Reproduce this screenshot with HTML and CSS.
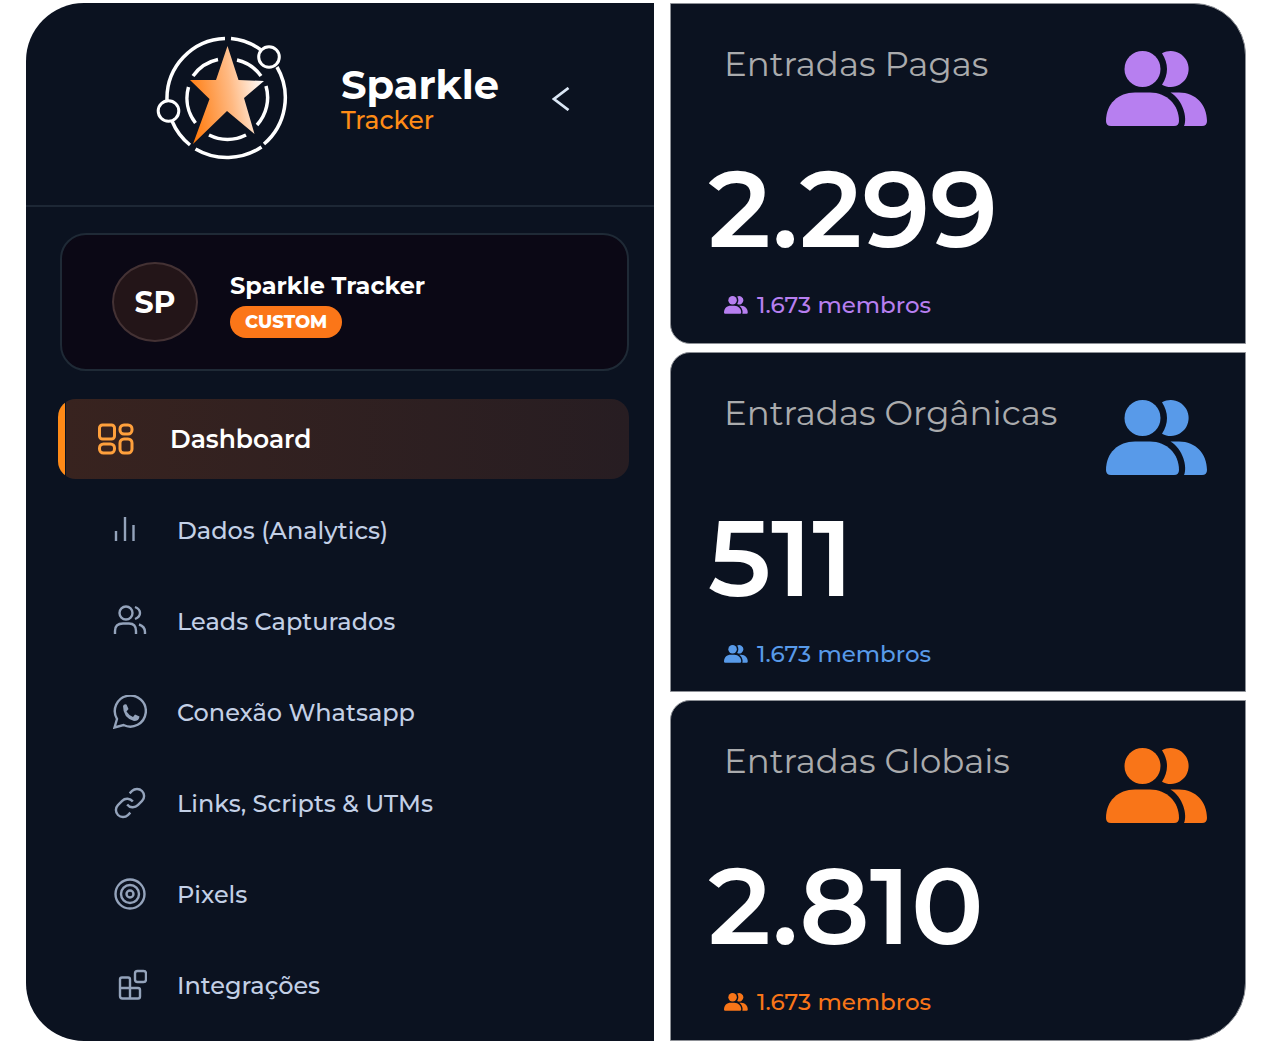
FILE: index.html
```html
<!DOCTYPE html>
<html lang="pt-BR">
<head>
<meta charset="utf-8">
<meta name="viewport" content="width=device-width, initial-scale=1">
<title>Sparkle Tracker</title>
<link rel="stylesheet" href="styles.css">
</head>
<body>
<svg class="sprite" aria-hidden="true">
  <symbol id="people" viewBox="0 0 102 76">
    <circle cx="36.5" cy="18" r="18"/>
    <path d="M56 2.2A18 18 0 1 1 56 33.800Q66 18 56 2.200Z"/>
    <path d="M0 70C0 53 12 41.500 29 41.500H44C61 41.500 73 54 73 70Q73 75 68 75H5Q0 75 0 70Z"/>
    <path d="M64.500 41.500H73C90 41.500 101 54 101 70Q101 75 96 75H78C81.500 67 77 49 64.500 41.500Z"/>
  </symbol>
</svg>
<div class="page">
  <aside class="sidebar">
    <header class="brand">
      <svg class="brand-logo" viewBox="0 0 134 124" fill="none" stroke="#fff" stroke-width="3.500" aria-hidden="true">
        <defs><linearGradient id="star" x1="0" y1="0.600" x2="1" y2="0.400"><stop offset="0" stop-color="#ff7a0c"/><stop offset="0.550" stop-color="#ffb982"/><stop offset="1" stop-color="#fff"/></linearGradient></defs>
        <path d="M69 2.500A60 60 0 0 0 11 64M16 85A60 60 0 0 0 34 109M39.500 113A62 62 0 0 0 105.500 111M108 108A61 61 0 0 0 121 31M105 14A60 60 0 0 0 75 2.500"/>
        <circle cx="113" cy="21" r="10.300" stroke-width="3"/>
        <circle cx="12.500" cy="75" r="10.300" stroke-width="3"/>
        <path d="M62 23.500A41 41 0 0 0 37 40M32.500 51A41 41 0 0 0 39.500 87M53 99A41 41 0 0 0 90 99M101 89A41 41 0 0 0 110 50M105 40A41 41 0 0 0 81 24"/>
        <path fill="url(#star)" stroke="none" d="M71.500 10L82.500 44L108 45L88 62L98.500 98L71 75L37 108L53.500 63L34 44L60 44Z"/>
      </svg>
      <div class="wordmark"><span class="wordmark-name">Sparkle</span><span class="wordmark-sub">Tracker</span></div>
      <button class="collapse" type="button" aria-label="Recolher menu">
        <svg viewBox="0 0 18 24" fill="none" stroke="currentColor" stroke-width="2.800"><path d="M16.500 1L2 12L16.500 23"/></svg>
      </button>
    </header>
    <section class="profile">
      <span class="avatar">SP</span>
      <div class="profile-info"><strong class="profile-name">Sparkle Tracker</strong><span class="badge">CUSTOM</span></div>
    </section>
    <nav class="menu">
      <a class="menu-item active" href="#"><svg class="icon" viewBox="0 0 36 32"><rect x="1.500" y="2" width="15" height="14" rx="3"/><rect x="22" y="2" width="12" height="9" rx="4"/><rect x="1.500" y="21" width="15" height="9" rx="4"/><rect x="22" y="16" width="12" height="14" rx="4"/></svg>Dashboard</a>
      <a class="menu-item" href="#"><svg class="icon" viewBox="0 0 34 34"><path d="M3 18V28M12 4V28M20.500 12V28"/></svg>Dados (Analytics)</a>
      <a class="menu-item" href="#"><svg class="icon" viewBox="0 0 34 34"><circle cx="13" cy="9" r="6.500"/><path d="M2 30V27Q2 19.500 10 19.500H16Q23 19.500 23 27V30M22 3Q27 5 27 9T22 15M26 20.500Q32 22.500 32 28V30"/></svg>Leads Capturados</a>
      <a class="menu-item" href="#"><svg class="icon" viewBox="0 0 34 34"><path d="M1.500 32.500L4 24A15.500 15.500 0 1 1 10.500 30Z"/><path class="solid" d="M10 11Q11 8.500 13.500 9.500L15.500 14L13.500 16.500Q16 20.500 20 22L22 19.500L26.500 21.500Q26 26 21 26Q10 23 10 11Z"/></svg>Conexão Whatsapp</a>
      <a class="menu-item" href="#"><svg class="icon" viewBox="0 0 24 24" ><g stroke-width="1.700"><path d="M10 13a5 5 0 0 0 7.540.540l3-3a5 5 0 0 0-7.070-7.070l-1.720 1.710"/><path d="M14 11a5 5 0 0 0-7.540-.540l-3 3a5 5 0 0 0 7.070 7.070l1.710-1.710"/></g></svg>Links, Scripts &amp; UTMs</a>
      <a class="menu-item" href="#"><svg class="icon" viewBox="0 0 34 34"><circle cx="17" cy="17" r="14.500"/><circle cx="17" cy="17" r="9"/><circle cx="17" cy="17" r="3.500"/></svg>Pixels</a>
      <a class="menu-item" href="#"><svg class="icon" viewBox="0 0 34 34"><path d="M17 20V11.500Q17 9.500 15 9.500H9Q7 9.500 7 11.500V28Q7 30.500 9.500 30.500H25Q27 30.500 27 28.500V22Q27 20 25 20H7M17 20V30.500"/><rect x="22" y="3" width="11" height="11" rx="2.500"/></svg>Integrações</a>
    </nav>
  </aside>
  <main class="stats">
    <article class="card purple">
      <div class="card-head"><h2 class="card-title">Entradas Pagas</h2><svg class="card-icon"><use href="#people"/></svg></div>
      <p class="value">2.299</p>
      <p class="members"><svg class="members-icon"><use href="#people"/></svg>1.673 membros</p>
    </article>
    <article class="card blue">
      <div class="card-head"><h2 class="card-title">Entradas Orgânicas</h2><svg class="card-icon"><use href="#people"/></svg></div>
      <p class="value">511</p>
      <p class="members"><svg class="members-icon"><use href="#people"/></svg>1.673 membros</p>
    </article>
    <article class="card orange">
      <div class="card-head"><h2 class="card-title">Entradas Globais</h2><svg class="card-icon"><use href="#people"/></svg></div>
      <p class="value">2.810</p>
      <p class="members"><svg class="members-icon"><use href="#people"/></svg>1.673 membros</p>
    </article>
  </main>
</div>
</body>
</html>
```
FILE: styles.css
```css
* { box-sizing: border-box; }

body {
  margin: 0;
  background: #fff;
  font-family: Montserrat, Inter, "Open Sans", sans-serif;
}

.sprite { display: none; }

.page {
  display: grid;
  grid-template-columns: 628fr 576fr;
  gap: 16px;
  min-height: 100vh;
  padding: 3px 26px;
}

.sidebar {
  background: #0b1220;
  border-radius: 58px 0 0 58px;
}

.brand {
  display: flex;
  align-items: flex-start;
  height: 204px;
  padding: 33px 84px 0 130px;
  border-bottom: 2px solid #1d2735;
}

.brand-logo { width: 134px; height: 124px; }

.wordmark {
  display: flex;
  flex-direction: column;
  margin: 26px auto 0 51px;
}

.wordmark-name {
  color: #fff;
  font-size: 40px;
  font-weight: 700;
  line-height: 46px;
}

.wordmark-sub {
  color: #ff8c16;
  font-size: 25px;
  font-weight: 500;
  line-height: 24px;
}

.collapse {
  margin: 51px 0 0;
  padding: 0;
  border: 0;
  background: none;
  color: #dbe7f5;
}

.collapse svg { display: block; width: 18px; height: 24px; }

.profile {
  display: flex;
  align-items: center;
  gap: 32px;
  height: 138px;
  margin: 26px 25px 0 34px;
  padding: 0 50px;
  border: 2px solid #1f2a36;
  border-radius: 26px;
  background: #0b0815;
}

.avatar {
  display: flex;
  align-items: center;
  justify-content: center;
  width: 86px;
  height: 80px;
  border: 2px solid #443234;
  border-radius: 50%;
  background: #231518;
  color: #fff;
  font-size: 30px;
  font-weight: 700;
}

.profile-info {
  display: flex;
  flex-direction: column;
  align-items: flex-start;
  gap: 4px;
  padding-top: 4px;
}

.profile-name {
  color: #fff;
  font-size: 24px;
  line-height: 32px;
}

.badge {
  padding: 0 15px;
  border-radius: 16px;
  background: #fb7618;
  color: #fff;
  font-size: 18px;
  font-weight: 800;
  line-height: 32px;
}

.menu {
  display: flex;
  flex-direction: column;
  gap: 11px;
  margin: 28px 25px 0 32px;
}

.menu-item {
  display: flex;
  align-items: center;
  gap: 30px;
  height: 80px;
  padding-left: 55px;
  border-radius: 18px;
  color: #c3d0e6;
  font-size: 24px;
  font-weight: 500;
  text-decoration: none;
}

.icon {
  width: 34px;
  height: 34px;
  fill: none;
  stroke: #94a3bb;
  stroke-width: 2.400;
}

.icon .solid { fill: #94a3bb; stroke: none; }

.active {
  gap: 36px;
  padding-left: 40px;
  background: linear-gradient(to right, #ff8a17 7px, #0b1220 7px, #0b1220 8px, #38231f 8px, #271d22);
  color: #fff;
  font-size: 25px;
  font-weight: 600;
}

.active .icon { width: 36px; height: 32px; stroke: #ffa03c; stroke-width: 3; }

.stats {
  display: grid;
  grid-auto-rows: 1fr;
  gap: 8px;
}

.card {
  padding: 40px 37px 16px 53px;
  border: 1px solid #8d9096;
  border-radius: 20px 0 0 0;
  background: #0b1220;
}

.card:first-child { border-radius: 0 52px 0 20px; }
.card:last-child { border-radius: 20px 0 58px 0; }

.card-head { display: flex; justify-content: space-between; }

.card-title {
  margin: 0;
  color: #aaabad;
  font-size: 34px;
  font-weight: 400;
  line-height: 40px;
}

.card-icon {
  width: 102px;
  height: 76px;
  margin-top: 7px;
  fill: currentColor;
}

.value {
  margin: 27px 0 27px -16px;
  color: #fff;
  font-size: 108px;
  font-weight: 600;
  line-height: 108px;
}

.members {
  display: flex;
  align-items: center;
  gap: 9px;
  margin: 0;
  font-size: 23px;
  font-weight: 500;
  line-height: 32px;
}

.members-icon { width: 24px; height: 18px; fill: currentColor; }

.purple { color: #b77ff0; }
.blue { color: #589ae9; }
.orange { color: #f97518; }
```
